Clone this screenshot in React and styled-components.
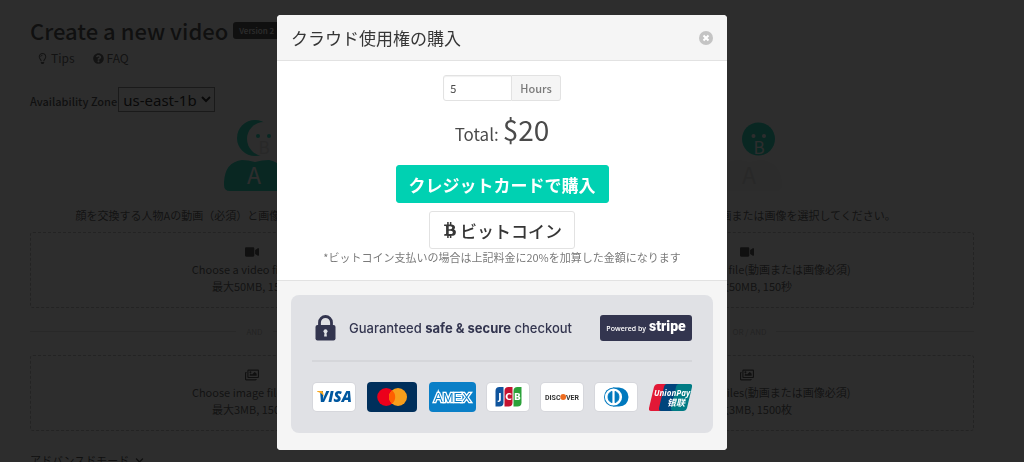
import React, {useState} from 'react';
import styled, {createGlobalStyle} from 'styled-components';
import {
  FaBtc,
  FaChevronDown,
  FaQuestionCircle,
  FaRegImages,
  FaRegLightbulb,
  FaVideo,
} from 'react-icons/fa';

const GlobalStyle = createGlobalStyle`
  *, *::before, *::after {
    box-sizing: border-box;
  }

  html, body {
    margin: 0;
    height: 100%;
    overflow: hidden;
  }

  body {
    background: #ffffff;
    color: #4a4a4a;
    font-family: 'Noto Sans CJK JP', sans-serif;
    font-size: 11px;
    line-height: 17px;
  }

  button, input, select {
    font-family: inherit;
    margin: 0;
  }
`;

const Page = styled.main`
  padding: 14px 50px 0 30px;
`;

const TitleRow = styled.div`
  display: flex;
  align-items: center;
  gap: 5px;
  height: 32px;
`;

const Title = styled.h1`
  margin: 0;
  color: #363636;
  font-size: 22px;
  font-weight: 500;
  line-height: 32px;
`;

const Tag = styled.span`
  height: 17px;
  padding: 0 6px;
  border-radius: 3px;
  background: #363636;
  color: #f5f5f5;
  font-size: 8px;
  font-weight: 500;
  white-space: nowrap;
`;

const Links = styled.nav`
  display: flex;
  gap: 18px;
  padding: 3px 7px 0;
`;

const PageLink = styled.a`
  display: flex;
  align-items: center;
  gap: 3px;
  color: #4a4a4a;
  font-size: 12px;
  line-height: 18px;
  text-decoration: none;
`;

const ZoneRow = styled.div`
  display: flex;
  align-items: baseline;
  gap: 1px;
  height: 25px;
  margin-top: 20px;
  color: #363636;
  font-weight: 500;
`;

const ZoneSelect = styled.select`
  width: 97px;
  height: 25px;
  padding: 0;
  border: 1px solid #767676;
  border-radius: 0;
  background: #ffffff;
  color: #000000;
  font-family: 'Noto Sans', sans-serif;
  font-size: 15px;
`;

const Columns = styled.div`
  display: grid;
  grid-template-columns: 1fr 1fr;
  gap: 46px;
  padding-top: 8px;
`;

const Column = styled.section`
  display: flex;
  flex-direction: column;
  align-items: center;
`;

const Description = styled.p`
  margin: 15px 0 8px;
  white-space: nowrap;
`;

const Drop = styled.label`
  display: flex;
  flex-direction: column;
  align-items: center;
  width: 100%;
  height: 76px;
  padding-top: 12px;
  border: 1px dashed #b5b5b5;
  border-radius: 3px;
  white-space: nowrap;
  cursor: pointer;

  svg {
    margin: 0 6px 2px 0;
    font-size: 14px;
    color: #363636;
  }
`;

const FileInput = styled.input`
  display: none;
`;

const Divider = styled.div`
  display: flex;
  align-items: center;
  gap: 10px;
  width: 100%;
  height: 47px;
  color: #b5b5b5;
  font-size: 8px;

  &::before,
  &::after {
    content: '';
    flex: 1;
    height: 1px;
    background: #dbdbdb;
  }
`;

const Advanced = styled.a`
  display: inline-flex;
  align-items: center;
  gap: 6px;
  margin-top: 21px;
  color: #363636;
  text-decoration: none;
`;

const Backdrop = styled.div`
  position: fixed;
  inset: 0;
  display: flex;
  justify-content: center;
  align-items: flex-start;
  padding: 15px 20px 0 0;
  background: rgba(10, 10, 10, 0.86);
`;

const Card = styled.section`
  width: 450px;
  max-width: 100%;
  border-radius: 4px;
  overflow: hidden;
  background: #ffffff;
`;

const CardHead = styled.header`
  display: flex;
  align-items: center;
  justify-content: space-between;
  height: 46px;
  padding: 0 14px;
  border-bottom: 1px solid #e2e2e2;
  background: #f5f5f5;
`;

const CardTitle = styled.h2`
  margin: 0;
  color: #363636;
  font-size: 17px;
  font-weight: 400;
  line-height: 24px;
`;

const CloseButton = styled.button`
  display: flex;
  padding: 0;
  border: 0;
  background: none;
  cursor: pointer;
`;

const CardBody = styled.div`
  display: flex;
  flex-direction: column;
  align-items: center;
  height: 219px;
  padding-top: 14px;
`;

const Field = styled.div`
  display: flex;
  height: 26px;
`;

const HoursInput = styled.input`
  width: 69px;
  padding: 0 6px;
  border: 1px solid #e2e2e2;
  border-radius: 3px 0 0 3px;
  color: #4a4a4a;
  font-size: 11px;
  box-shadow: inset 0 1px 1px rgba(10, 10, 10, 0.06);
  outline: none;
`;

const Unit = styled.label`
  padding: 0 8px;
  border: 1px solid #e2e2e2;
  border-left: 0;
  border-radius: 0 3px 3px 0;
  background: #f5f5f5;
  color: #7a7a7a;
  font-size: 11px;
  font-weight: 500;
  line-height: 24px;
`;

const Total = styled.p`
  display: flex;
  align-items: baseline;
  gap: 4px;
  margin: 8px 0 11px;
  font-size: 17px;
  line-height: 41px;
`;

const Price = styled.span`
  font-size: 28px;
`;

const PayButton = styled.button`
  display: flex;
  align-items: center;
  gap: 2px;
  height: 38px;
  padding: 0 12px;
  border: 1px solid ${({$primary}) => ($primary ? '#00d1b2' : '#e2e2e2')};
  border-radius: 3px;
  background: ${({$primary}) => ($primary ? '#00d1b2' : '#ffffff')};
  color: ${({$primary}) => ($primary ? '#ffffff' : '#363636')};
  font-size: 17px;
  font-weight: ${({$primary}) => ($primary ? 700 : 500)};
  white-space: nowrap;
  cursor: pointer;

  & + & {
    margin-top: 8px;
  }
`;

const Note = styled.small`
  color: #7a7a7a;
  font-size: 11px;
  white-space: nowrap;
`;

const CardFoot = styled.footer`
  padding: 14px 14px 17px;
  border-top: 1px solid #e2e2e2;
  background: #f5f5f5;
`;

const Checkout = styled.div`
  height: 138px;
  padding: 21px 21px 0;
  border-radius: 8px;
  background: #e0e1e5;
`;

const Guarantee = styled.div`
  display: flex;
  align-items: center;
  height: 46px;
  padding-bottom: 20px;
  border-bottom: 2px solid #d5d6da;
`;

const GuaranteeText = styled.span`
  flex: 1;
  padding-left: 13px;
  color: #33354f;
  font-family: Inter, sans-serif;
  font-size: 13px;
  font-weight: 500;
  white-space: nowrap;

  strong {
    font-weight: 700;
  }
`;

const Powered = styled.a`
  display: flex;
  align-items: center;
  justify-content: center;
  gap: 3px;
  width: 92px;
  height: 26px;
  border-radius: 3px;
  background: #33354f;
  color: #ffffff;
  font-family: 'Open Sans', sans-serif;
  font-size: 7px;
  font-weight: 600;
  text-decoration: none;
  white-space: nowrap;

  strong {
    padding-bottom: 3px;
    font-family: Roboto, sans-serif;
    font-size: 14px;
    font-weight: 900;
  }
`;

const Brands = styled.div`
  display: flex;
  align-items: center;
  justify-content: space-between;
  padding: 20px 0 0 1px;
`;

const Brand = styled.span`
  display: flex;
  align-items: center;
  justify-content: center;
  width: ${({$width}) => $width || 42}px;
  height: ${({$fill}) => ($fill ? 30 : 28)}px;
  border-radius: 4px;
  background: ${({$fill}) => $fill || '#ffffff'};
  box-shadow: ${({$fill}) => ($fill ? 'none' : '0 0 0 1px #d6d7dc')};
`;

const FigureA = () => (
  <svg width="64" height="72" viewBox="-1 0 64 72">
    <path d="M0 65V62Q1 42 18 40Q24 40 31 42Q38 40 45 40Q61 43 62 62V65Q62 71 56 71H6Q0 71 0 65Z" fill="#00d1b2" />
    <circle cx="31" cy="18" r="18" fill="#00d1b2" />
    <circle cx="40" cy="19" r="17" fill="#fafafa" />
    <circle cx="34" cy="16" r="2" fill="#00d1b2" />
    <circle cx="45" cy="16" r="2" fill="#00d1b2" />
    <text x="40" y="34" textAnchor="middle" fontSize="17" fill="#dbdbdb">B</text>
    <text x="30" y="64" textAnchor="middle" fontSize="23" fill="#ffffff">A</text>
  </svg>
);

const FigureB = () => (
  <svg width="64" height="72" viewBox="0 0 64 72">
    <path d="M0 65V62Q1 42 18 40Q24 40 31 42Q38 40 45 40Q62 43 64 62V65Q64 71 58 71H6Q0 71 0 65Z" fill="#f5f5f5" />
    <circle cx="31" cy="18" r="18" fill="#fafafa" />
    <circle cx="40.500" cy="19" r="16.500" fill="#00d1b2" />
    <circle cx="35.500" cy="16" r="2" fill="#ffffff" />
    <circle cx="46" cy="16" r="2" fill="#ffffff" />
    <text x="41" y="34" textAnchor="middle" fontSize="17" fill="#ffffff">B</text>
    <text x="31" y="64" textAnchor="middle" fontSize="23" fill="#dbdbdb">A</text>
  </svg>
);

const LockIcon = () => (
  <svg width="24" height="26" viewBox="-1 0 24 26">
    <path d="M6.500 12V7.500a6 6 0 0 1 12 0V12" fill="none" stroke="#33354f" strokeWidth="2.800" />
    <rect x="2.500" y="10" width="20" height="15.500" rx="2" fill="#33354f" />
    <circle cx="12.500" cy="16.300" r="2" fill="#e0e1e5" />
    <path d="M11.600 17h1.800l.5 4.500h-2.800z" fill="#e0e1e5" />
  </svg>
);

const CloseIcon = () => (
  <svg width="14" height="14" viewBox="0 0 14 14">
    <circle cx="7" cy="7" r="7" fill="#c4c4c4" />
    <path d="M4.500 4.500l5 5M9.500 4.500l-5 5" stroke="#ffffff" strokeWidth="2" />
  </svg>
);

const VisaLogo = () => (
  <svg width="36" height="24" viewBox="0 0 36 24">
    <text x="3" y="17" fontFamily="Open Sans, sans-serif" fontSize="15" fontWeight="800" fontStyle="italic" fill="#00579f">VISA</text>
    <path d="M1 6h4.500q1.300 0 1.600 1.400l.9 4.500Q6 8 1 6.500z" fill="#faa61a" />
  </svg>
);

const MastercardLogo = () => (
  <svg width="32" height="20" viewBox="0 0 32 20">
    <circle cx="10.200" cy="10" r="9" fill="#eb001b" />
    <circle cx="22" cy="10" r="9" fill="#f79e1b" />
    <path d="M16.100 3.200a9 9 0 0 1 0 13.600a9 9 0 0 1 0-13.600z" fill="#ff5f00" />
  </svg>
);

const AmexLogo = () => (
  <svg width="43" height="20" viewBox="0 0 43 20">
    <text
      x="21.500"
      y="14.500"
      textAnchor="middle"
      fontFamily="Liberation Sans, sans-serif"
      fontSize="13"
      fontWeight="400"
      fill="#0a7fc7"
      stroke="#ffffff"
      strokeWidth="2.600"
      paintOrder="stroke"
    >
      AMEX
    </text>
  </svg>
);

const JcbLogo = () => (
  <svg width="27" height="20" viewBox="0 0 27 20">
    <path d="M4.500 0H8.500V15.500q0 4-4 4H.5V4q0-4 4-4z" fill="#0f549d" />
    <path d="M13.500 0h4V15.500q0 4-4 4h-4V4q0-4 4-4z" fill="#c41230" />
    <path d="M22.500 0h4V15.500q0 4-4 4h-4V4q0-4 4-4z" fill="#2ba139" />
    <g fontFamily="DejaVu Sans, sans-serif" fontSize="9" fontWeight="700" fill="#ffffff" textAnchor="middle">
      <text x="5" y="13">J</text>
      <text x="13.500" y="13">C</text>
      <text x="22.500" y="13">B</text>
    </g>
  </svg>
);

const DiscoverLogo = () => (
  <svg width="36" height="10" viewBox="0 0 36 10">
    <g fontFamily="Roboto, sans-serif" fontSize="7" fontWeight="700" fill="#333333">
      <text x="1" y="7.500">DISC</text>
      <text x="22" y="7.500">VER</text>
    </g>
    <circle cx="19.200" cy="5" r="2.900" fill="#ee6c20" />
  </svg>
);

const DinersLogo = () => (
  <svg width="26" height="20" viewBox="0 0 26 20">
    <path d="M10 .5h6q9 1 9.500 9.500Q25 19 16 19.500h-6z" fill="#0079be" />
    <circle cx="10.500" cy="10" r="9.500" fill="#0079be" />
    <circle cx="10.500" cy="10" r="8.600" fill="#ffffff" />
    <path d="M9 4.200a6.200 6.200 0 0 0 0 11.600zM12 4.200a6.200 6.200 0 0 1 0 11.600z" fill="#0079be" stroke="#0079be" strokeWidth="0.800" />
  </svg>
);

const UnionPayLogo = () => (
  <svg width="43" height="27" viewBox="0 0 43 27">
    <path d="M9 0h10l-6 27H2q-2.500 0-2-3L5 3q1-3 4-3z" fill="#e21836" />
    <path d="M18 0h13l-6 27H12q-2.500 0-2-3l5-21q.5-3 3-3z" fill="#00447c" />
    <path d="M30 0h11q2.500 0 2 3l-5 21q-1 3-4 3H24q-2.500 0-2-3l5-21q.5-3 3-3z" fill="#007b84" />
    <g fill="#ffffff" fontStyle="italic" fontWeight="700">
      <text x="5" y="12" fontFamily="Open Sans, sans-serif" fontSize="8">UnionPay</text>
      <text x="18" y="22" fontFamily="Noto Sans CJK SC, sans-serif" fontSize="9">银联</text>
    </g>
  </svg>
);

const Upload = ({icon, label, limit, ...rest}) => (
  <Drop>
    {icon}
    <span>{label}</span>
    <span>{limit}</span>
    <FileInput type="file" {...rest} />
  </Drop>
);

const PurchaseModal = ({onClose}) => {
  const [hours, setHours] = useState(5);
  return (
    <Backdrop>
      <Card role="dialog" aria-modal="true" aria-labelledby="purchase-title">
        <CardHead>
          <CardTitle id="purchase-title">クラウド使用権の購入</CardTitle>
          <CloseButton type="button" aria-label="close" onClick={onClose}>
            <CloseIcon />
          </CloseButton>
        </CardHead>
        <CardBody>
          <Field>
            <HoursInput id="hours" value={hours} onChange={(e) => setHours(e.target.value)} />
            <Unit htmlFor="hours">Hours</Unit>
          </Field>
          <Total>
            Total: <Price>${hours * 4}</Price>
          </Total>
          <PayButton type="button" $primary>
            クレジットカードで購入
          </PayButton>
          <PayButton type="button">
            <FaBtc size={16} />
            ビットコイン
          </PayButton>
          <Note>*ビットコイン支払いの場合は上記料金に20%を加算した金額になります</Note>
        </CardBody>
        <CardFoot>
          <Checkout>
            <Guarantee>
              <LockIcon />
              <GuaranteeText>
                Guaranteed <strong>safe &amp; secure</strong> checkout
              </GuaranteeText>
              <Powered href="#stripe">
                Powered by <strong>stripe</strong>
              </Powered>
            </Guarantee>
            <Brands>
              <Brand><VisaLogo /></Brand>
              <Brand $width={50} $fill="#002f5b"><MastercardLogo /></Brand>
              <Brand $width={47} $fill="#0a7fc7"><AmexLogo /></Brand>
              <Brand><JcbLogo /></Brand>
              <Brand><DiscoverLogo /></Brand>
              <Brand><DinersLogo /></Brand>
              <UnionPayLogo />
            </Brands>
          </Checkout>
        </CardFoot>
      </Card>
    </Backdrop>
  );
};

const App = () => {
  const [open, setOpen] = useState(true);
  return (
    <>
      <GlobalStyle />
      <Page>
        <TitleRow>
          <Title>Create a new video</Title>
          <Tag>Version 2</Tag>
        </TitleRow>
        <Links>
          <PageLink href="#tips">
            <FaRegLightbulb size={11} />
            Tips
          </PageLink>
          <PageLink href="#faq">
            <FaQuestionCircle size={11} />
            FAQ
          </PageLink>
        </Links>
        <ZoneRow>
          <label htmlFor="zone">Availability Zone</label>
          <ZoneSelect id="zone">
            <option>us-east-1b</option>
          </ZoneSelect>
        </ZoneRow>
        <Columns>
          <Column>
            <FigureA />
            <Description>顔を交換する人物Aの動画（必須）と画像（任意）を選択してください。</Description>
            <Upload icon={<FaVideo />} label="Choose a video file(必須)" limit="最大50MB, 150秒" accept="video/*" />
            <Divider>AND</Divider>
            <Upload icon={<FaRegImages />} label="Choose image files(任意)" limit="最大3MB, 1500枚" accept="image/*" multiple />
          </Column>
          <Column>
            <FigureB />
            <Description>顔を交換する人物Bの動画または画像を選択してください。</Description>
            <Upload icon={<FaVideo />} label="Choose a video file(動画または画像必須)" limit="最大50MB, 150秒" accept="video/*" />
            <Divider>OR / AND</Divider>
            <Upload icon={<FaRegImages />} label="Choose image files(動画または画像必須)" limit="最大3MB, 1500枚" accept="image/*" multiple />
          </Column>
        </Columns>
        <Advanced href="#advanced">
          アドバンスドモード
          <FaChevronDown size={9} />
        </Advanced>
      </Page>
      {open && <PurchaseModal onClose={() => setOpen(false)} />}
    </>
  );
};

export default App;
